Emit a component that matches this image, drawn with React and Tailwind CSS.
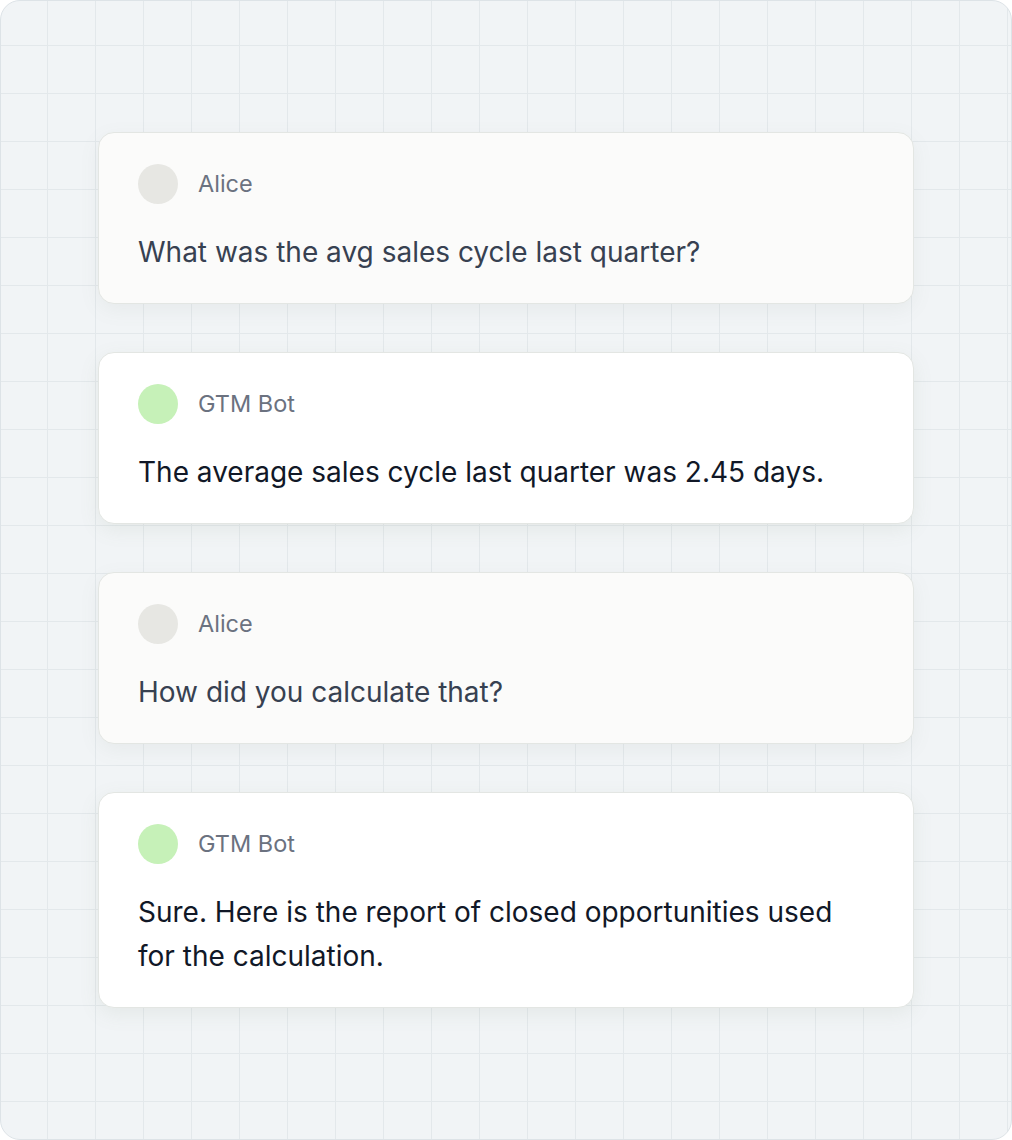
import React from "react";

const messages = [
  { who: "Alice", bot: false, text: "What was the avg sales cycle last quarter?" },
  { who: "GTM Bot", bot: true, text: "The average sales cycle last quarter was 2.45 days." },
  { who: "Alice", bot: false, text: "How did you calculate that?" },
  {
    who: "GTM Bot",
    bot: true,
    text: "Sure. Here is the report of closed opportunities used for the calculation.",
  },
];

function Card({ m }) {
  return (
    <div
      className={
        m.bot
          ? "rounded-2xl border border-[#e3e6e3] bg-white px-[39px] pt-[31px] pb-[29px] shadow-[0_6px_20px_rgba(120,140,110,0.10)]"
          : "rounded-2xl border border-[#e3e6e3] bg-[#fbfbfa] px-[39px] pt-[31px] pb-[29px] shadow-[0_6px_20px_rgba(120,130,120,0.08)]"
      }
    >
      <div className="flex h-10 items-center gap-5">
        <div
          className={
            m.bot
              ? "h-10 w-10 shrink-0 rounded-full bg-[#c6f1b8]"
              : "h-10 w-10 shrink-0 rounded-full bg-[#e7e7e3]"
          }
        />
        <span className="text-[23.5px] leading-8 text-[#6b7280]">{m.who}</span>
      </div>
      <p
        className={
          m.bot
            ? "mt-[26px] text-[28px] leading-[44px] text-[#111827]"
            : "mt-[26px] text-[28px] leading-[44px] text-[#374151]"
        }
      >
        {m.text}
      </p>
    </div>
  );
}

export default function App() {
  return (
    <div
      className="h-[1140px] w-[1012px] rounded-[20px] border border-[#dde3e7] bg-[#f1f4f6] bg-[linear-gradient(to_right,#e3e8eb_1px,transparent_1px),linear-gradient(to_bottom,#e3e8eb_1px,transparent_1px)] bg-[size:48px_48px] bg-[position:46px_44px] px-[97px] pt-[131px]"
      style={{ fontFamily: "Inter, 'Noto Sans', sans-serif" }}
    >
      <div className="flex flex-col gap-[48px]">
        {messages.map((m, i) => (
          <Card key={i} m={m} />
        ))}
      </div>
    </div>
  );
}
